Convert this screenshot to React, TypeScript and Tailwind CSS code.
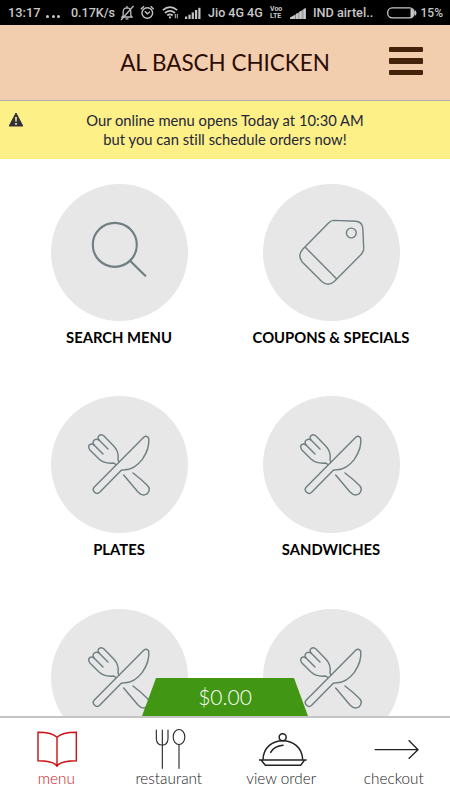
import React, { useState } from 'react';

function SignalIcon() {
    return (
        <svg width="16" height="12" viewBox="0 0 16 12" fill="#c4c4c4">
            <rect x="0" y="9.5" width="2.2" height="2.5" />
            <rect x="3.4" y="7.7" width="2.2" height="4.3" />
            <rect x="6.7" y="5.4" width="2.2" height="6.6" />
            <rect x="10" y="3" width="2.2" height="9" />
            <rect x="13.3" y="0.8" width="2.2" height="11.2" />
        </svg>
    )
}

function SlopedSignalIcon() {
    return (
        <svg width="17" height="12" viewBox="0 0 17 12">
            <path d="M0 12 V10.5 L5.5 7.5 V12 Z" fill="#c8c8c8" />
            <path d="M5.5 12 V7.5 L16 0.8 V12 Z" fill="#a4a4a4" />
            <path d="M7 6.5 V12 M10.5 4.3 V12 M14.5 1.8 V12" stroke="#d0d0d0" strokeWidth="1.6" />
        </svg>
    )
}

function BellOffIcon() {
    return (
        <svg width="15" height="16" viewBox="0 0 15 16" fill="none" stroke="#bdbdbd" strokeWidth="1.3">
            <path d="M2 12 H12 L10.8 10.3 V6.5 Q10.6 3 7 2.8 Q3.4 3 3.2 6.5 V10.3 Z M5.5 13.8 H8.5 M7 1 V2.8" />
            <path d="M1 15 L13.5 1" />
        </svg>
    )
}

function AlarmIcon() {
    return (
        <svg width="15" height="15" viewBox="0 0 15 15" fill="none" stroke="#c4c4c4" strokeWidth="1.4">
            <circle cx="7.3" cy="8" r="5.3" />
            <path d="M4.8 6.3 L7.3 8.8 L10 6.8 M0.9 4.2 L4 1.3 M10.6 1.3 L13.7 4.2" />
        </svg>
    )
}

function WifiIcon() {
    return (
        <svg width="17" height="13" viewBox="0 0 17 13" fill="none" stroke="#c4c4c4" strokeWidth="1.7">
            <path d="M0.8 4.2 Q8 -1.8 15.2 4.2 M3 7 Q8 2.6 13 7 M5.3 9.5 Q8 7.2 10.7 9.5" />
            <circle cx="8" cy="11.4" r="1.1" fill="#c4c4c4" stroke="none" />
            <path d="M13.3 8 V12.3 M15.3 8 V12.3" strokeWidth="1" />
        </svg>
    )
}

function StatusBar() {
    return (
        <div className="flex h-[25px] items-center bg-black pl-2 font-['Roboto',sans-serif] text-[13px] font-medium leading-none whitespace-nowrap text-[#c8c8c8]">
            <span className="w-[38px] shrink-0 pt-px text-[12.8px]">13:17</span>
            <span className="flex w-[25px] shrink-0 gap-[2.5px] pt-[7px]">
                <i className="size-[3px] rounded-full bg-[#c8c8c8]" />
                <i className="size-[3px] rounded-full bg-[#c8c8c8]" />
                <i className="size-[3px] rounded-full bg-[#c8c8c8]" />
            </span>
            <span className="w-[49px] shrink-0 pt-px text-[12.5px]">0.17K/s</span>
            <span className="w-[20px] shrink-0"><BellOffIcon /></span>
            <span className="w-[22px] shrink-0"><AlarmIcon /></span>
            <span className="w-[23px] shrink-0"><WifiIcon /></span>
            <span className="w-[23px] shrink-0"><SignalIcon /></span>
            <span className="w-[62px] shrink-0 pt-px text-[12.5px]">Jio 4G 4G</span>
            <span className="flex w-[20px] shrink-0 flex-col text-[7px] leading-[7px] font-bold">
                <span>Voo</span>
                <span>LTE</span>
            </span>
            <span className="w-[23px] shrink-0"><SlopedSignalIcon /></span>
            <span className="w-[74px] shrink-0 pt-px text-[12.7px]">IND airtel..</span>
            <span className="w-[33.5px] shrink-0">
                <svg width="30" height="12" viewBox="0 0 30 12" fill="none">
                    <rect x="0.7" y="0.8" width="26.5" height="10" rx="4.5" stroke="#c8c8c8" strokeWidth="1.3" />
                    <path d="M23.5 2 L25 2 Q27 2.5 27 6 Q27 9.5 25 10 L23.5 10 Z M28 3 Q31 6 28 9 Z" fill="#c8c8c8" />
                </svg>
            </span>
            <span className="shrink-0 pt-px text-[12px]">15%</span>
        </div>
    )
}

function SearchIcon() {
    return (
        <svg className="size-full" viewBox="0 0 137 137" fill="none" stroke="#6f7f82" strokeWidth="2.2" strokeLinecap="round">
            <circle cx="63.8" cy="60.8" r="22" />
            <path d="M79 76.7 L94.3 91.7" />
        </svg>
    )
}

function CouponIcon() {
    return (
        <svg className="size-full" viewBox="0 0 137 137" fill="none" stroke="#6f7f82" strokeWidth="1.4">
            <path d="M71 36.4 L93 37.2 Q99.4 38 99.8 44.3 L100.7 64 Q100.9 67.6 98.3 70.3 L71 97.7 Q65 102.7 59 97.7 L39 77.7 Q34.4 71.5 39.5 65.5 L65.5 39 Q68 36.4 71 36.4 Z" />
            <path d="M42 63 L74 95.3" />
            <circle cx="88.3" cy="49" r="4.9" />
        </svg>
    )
}

function CutleryIcon() {
    return (
        <svg className="size-full" viewBox="0 0 137 137" fill="none" stroke="#6f7f82" strokeWidth="4.3" strokeLinecap="round" strokeLinejoin="round">
            <g transform="translate(24 24) scale(0.3333)">
                <path d="M207 51 Q214 45 221 54 Q225 85 202 118 Q179 148 151 149 L139 151 L74 217 Q66 224 58 216 Q51 209 58 201 Z" />
                <path d="M122 133 L116 129 Q88 132 72 117 L44 89 Q38 79 44 74 Q50 69 57 75 L84 102" />
                <path d="M57 75 Q51 66 58 60 Q65 55 72 60 L99 87" />
                <path d="M72 60 Q66 51 73 46 Q80 41 87 48 L117 79 Q133 97 129 119 L132 126" />
                <path d="M146 165 L189 216 Q202 230 216 222 Q228 210 219 198 Q197 176 174 159" />
            </g>
        </svg>
    )
}

function BookIcon() {
    return (
        <svg width="60" height="44" viewBox="0 0 180 132" fill="none" stroke="#cc1418" strokeWidth="4.3">
            <path d="M93 123 V34 Q78 19 36 19 V104 Q82 104 93 120 Q104 104 151 104 V19 Q108 19 93 34" />
        </svg>
    )
}

function RestaurantIcon() {
    return (
        <svg width="60" height="44" viewBox="0 0 180 132" fill="none" stroke="#2b2b2b" strokeWidth="3.4" strokeLinecap="round">
            <path d="M52 12 V38 Q53 57 70 57 Q86 57 87 38 V12 M70 12 V127" />
            <ellipse cx="120" cy="33" rx="17.5" ry="22.5" />
            <path d="M120 56 V127" />
        </svg>
    )
}

function OrderIcon() {
    return (
        <svg width="60" height="44" viewBox="0 0 180 132" fill="none" stroke="#222" strokeWidth="4.5">
            <circle cx="95" cy="34" r="10.5" />
            <path d="M36 101 C38 25 152 25 155 101" />
            <path d="M24 102 H167 M31 103 L43 118 H149 L160 103" />
            <path d="M59 79 Q70 60 96 58" strokeLinecap="round" />
        </svg>
    )
}

function CheckoutIcon() {
    return (
        <svg width="60" height="44" viewBox="0 0 180 132" fill="none" stroke="#222" strokeWidth="4">
            <path d="M32 71 H162 M134 43 L162 71 L134 98" />
        </svg>
    )
}

const categories = [
    { id: 1, label: "SEARCH MENU", icon: <SearchIcon /> },
    { id: 2, label: "COUPONS & SPECIALS", icon: <CouponIcon /> },
    { id: 3, label: "PLATES", icon: <CutleryIcon /> },
    { id: 4, label: "SANDWICHES", icon: <CutleryIcon /> },
    { id: 5, label: "", icon: <CutleryIcon /> },
    { id: 6, label: "", icon: <CutleryIcon /> },
]

const tabs = [
    { id: "menu", icon: <BookIcon /> },
    { id: "restaurant", icon: <RestaurantIcon /> },
    { id: "view order", icon: <OrderIcon /> },
    { id: "checkout", icon: <CheckoutIcon /> },
]

function App() {
    const [activeTab, setActiveTab] = useState("menu");
    return (
        <div className="flex h-[800px] w-[450px] flex-col overflow-hidden bg-white font-['Lato',sans-serif]">
            <StatusBar />
            <header className="grid h-[76px] shrink-0 grid-cols-[88px_1fr_88px] items-center border-b border-[#b0aeb5] bg-[#f3ceae]">
                <span />
                <h1 className="pt-px text-center text-[22.45px] whitespace-nowrap text-[#2c0d05]">AL BASCH CHICKEN</h1>
                <button className="mb-[3px] ml-[27px] flex w-[34px] flex-col gap-[6px]">
                    <span className="h-[5.5px] w-full rounded-[1px] bg-[#45230a]" />
                    <span className="h-[5.5px] w-full rounded-[1px] bg-[#45230a]" />
                    <span className="h-[5.5px] w-full rounded-[1px] bg-[#45230a]" />
                </button>
            </header>
            <div className="grid h-[58px] shrink-0 grid-cols-[32px_1fr_32px] bg-[#fcf087] pt-[10px] text-[#25253c]">
                <svg className="mt-[1px] ml-2" width="16" height="15" viewBox="0 0 16 15">
                    <path d="M8 1 L14.8 14 H1.2 Z" fill="#30303c" stroke="#30303c" strokeLinejoin="round" />
                    <path d="M7.1 5 H8.9 L8.6 9.8 H7.4 Z M7.1 11 H8.9 V12.7 H7.1 Z" fill="#fcf087" />
                </svg>
                <p className="text-center text-[14.75px] leading-[19px] [font-variant-ligatures:none]">
                    Our online menu opens Today at 10:30 AM<br />
                    but you can still schedule orders now!
                </p>
            </div>
            <main className="relative min-h-0 flex-1 overflow-hidden">
                <div className="grid auto-rows-[212.5px] grid-cols-2 px-[13px] pt-[24.5px]">
                    {categories.map((item) => (
                        <div key={item.id} className="flex flex-col items-center">
                            <div className="size-[137px] shrink-0 rounded-full bg-[#e7e7e7]">{item.icon}</div>
                            {item.label && (
                                <span className="mt-[6px] text-[14.8px] leading-5 font-bold whitespace-nowrap text-black">{item.label}</span>
                            )}
                        </div>
                    ))}
                </div>
                <div className="absolute bottom-0 left-[142px] flex h-[38px] w-[166px] items-center justify-center bg-[#419613] text-[21px] font-light text-white [clip-path:polygon(14px_0,152px_0,100%_100%,0_100%)]">
                    $0.00
                </div>
            </main>
            <nav className="grid h-[84px] shrink-0 grid-cols-4 border-t-2 border-[#c4c4c4] bg-white">
                {tabs.map((tab) => (
                    <button key={tab.id} onClick={() => setActiveTab(tab.id)} className="flex flex-col items-center pt-2">
                        {tab.icon}
                        <span className={activeTab === tab.id ? "-mt-px text-[15.3px] leading-[18px] font-light text-[#cc1418]" : "-mt-px text-[15.3px] leading-[18px] font-light text-[#222]"}>{tab.id}</span>
                    </button>
                ))}
            </nav>
        </div>
    );
}

export default App;
